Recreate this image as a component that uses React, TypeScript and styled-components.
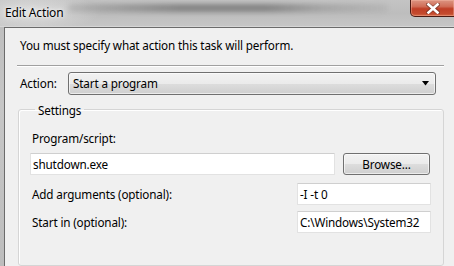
import React from 'react';
import styled, { createGlobalStyle } from 'styled-components';

const Global = createGlobalStyle`
  html, body { margin: 0; padding: 0; background: #c4c4c4; }
  body {
    font-family: "Noto Sans", "Open Sans", "DejaVu Sans", sans-serif;
    font-size: 11.7px;
    letter-spacing: -0.15px;
    color: #000;
  }
`;

const Screen = styled.div`
  width: 454px;
  height: 266px;
  overflow: hidden;
  display: flex;
  flex-direction: column;
  background: linear-gradient(180deg, #bcbcbc 0%, #c6c6c6 40%, #bdbdbd 100%);
`;

const TitleBar = styled.div`
  position: relative;
  height: 26px;
  flex: none;
  display: flex;
  justify-content: space-between;
  align-items: flex-start;
  border-bottom: 1px solid #d6d6d6;
  background:
    radial-gradient(ellipse 70px 20px at 30px 12px, rgba(235, 235, 235, 0.7), rgba(235, 235, 235, 0)),
    linear-gradient(180deg, #c4c4c4 0%, #bdbdbd 50%, #c6c6c6 100%);
  overflow: hidden;

  &::before {
    content: "";
    position: absolute;
    left: 68px;
    top: 4px;
    width: 320px;
    height: 8px;
    border-radius: 4px;
    background: linear-gradient(90deg,
      rgba(140,140,140,0.3) 0%,
      rgba(125,125,125,0.5) 15%,
      rgba(100,100,100,0.65) 35%,
      rgba(100,100,100,0.65) 62%,
      rgba(135,135,135,0.45) 80%,
      rgba(155,155,155,0.25) 100%);
    filter: blur(2.5px);
  }
`;

const Title = styled.div`
  position: relative;
  padding: 5px 0 0 5px;
  line-height: 16px;
  font-size: 12px;
  color: #000;
  text-shadow: 0 0 6px rgba(255, 255, 255, 0.95), 0 0 3px rgba(255, 255, 255, 0.8);
`;

const CloseButton = styled.div`
  position: relative;
  width: 43px;
  height: 16px;
  margin-right: -1px;
  border: 1px solid #4a1a12;
  border-top: none;
  border-radius: 0 0 0 5px;
  background: linear-gradient(180deg, #dc9482 0%, #d06e58 40%, #bf3e26 55%, #c44a2e 85%, #d46a48 100%);
  box-shadow: inset 0 0 0 1px rgba(255, 200, 180, 0.35);
  display: flex;
  align-items: center;
  justify-content: center;
`;

const Frame = styled.div`
  flex: 1;
  display: flex;
  padding-left: 4px;
  min-height: 0;
`;

const Client = styled.div`
  flex: 1;
  background: #f0f0f0;
  border-left: 1px solid #6b6b6b;
  border-top: 1px solid #6b6b6b;
  padding-top: 9px;
  display: flex;
  flex-direction: column;
  min-height: 0;
`;

const Message = styled.div`
  padding-left: 15px;
  line-height: 16px;
`;

const Separator = styled.div`
  margin: 12px 10px 0 12px;
  height: 1px;
  background: #a0a0a0;
  border-bottom: 1px solid #ffffff;
`;

const ActionRow = styled.div`
  margin-top: 5px;
  padding: 0 18px 0 15px;
  display: flex;
  align-items: center;
`;

const Label = styled.span<{ $width?: number; $indent?: number }>`
  flex: none;
  line-height: 16px;
  white-space: nowrap;
  ${(p) => (p.$width ? `width: ${p.$width}px;` : '')}
  ${(p) => (p.$indent ? `margin-left: ${p.$indent}px;` : '')}
`;

const Combo = styled.div`
  flex: 1;
  height: 21px;
  border: 1px solid #707070;
  border-radius: 3px;
  background: linear-gradient(180deg, #f2f2f2 0%, #ebebeb 50%, #dddddd 51%, #cfcfcf 100%);
  box-shadow: inset 0 0 0 1px rgba(255, 255, 255, 0.6);
  display: flex;
  align-items: center;
  justify-content: space-between;
  padding: 0 5px 0 4px;
`;

const ComboText = styled.span`
  line-height: 16px;
`;

const Group = styled.fieldset`
  margin: 7px 10px 0 13px;
  padding: 12px 12px 0 11px;
  border: 1px solid #d5d5d5;
  border-radius: 3px;
  box-shadow: inset 1px 1px 0 #ffffff;
  height: 200px;
  min-width: 0;
`;

const Legend = styled.legend`
  margin-left: 5px;
  padding: 0 3px;
  line-height: 16px;
`;

const FieldLabelRow = styled.div`
  padding-left: 2px;
  line-height: 16px;
`;

const Row = styled.div<{ $gap: number }>`
  margin-top: ${(p) => p.$gap}px;
  display: flex;
  align-items: center;
  justify-content: space-between;
  gap: 8px;
`;

const TextBox = styled.div<{ $width?: number }>`
  ${(p) => (p.$width ? `width: ${p.$width}px; flex: none;` : 'flex: 1;')}
  height: 22px;
  box-sizing: border-box;
  background: #ffffff;
  border: 1px solid #e2e2e2;
  border-top-color: #cfcfcf;
  border-radius: 1px;
  padding: 0 3px 0 2px;
  display: flex;
  align-items: center;
  line-height: 16px;
  white-space: nowrap;
  overflow: hidden;
`;

const Button = styled.div`
  flex: none;
  width: 87px;
  height: 22px;
  box-sizing: border-box;
  margin-right: 1px;
  border: 1px solid #707070;
  border-radius: 3px;
  background: linear-gradient(180deg, #f2f2f2 0%, #ebebeb 50%, #dddddd 51%, #cfcfcf 100%);
  box-shadow: inset 0 0 0 1px rgba(255, 255, 255, 0.6);
  display: flex;
  align-items: center;
  justify-content: center;
  line-height: 16px;
`;

const CloseGlyph = () => (
  <svg width="14" height="11" viewBox="0 0 14 11">
    <path d="M2 1.5 L12 9.5 M12 1.5 L2 9.5" stroke="#5a2a22" strokeWidth="4.2" strokeLinecap="square" opacity="0.55" />
    <path d="M2.5 1.5 L11.5 9.5 M11.5 1.5 L2.5 9.5" stroke="#ffffff" strokeWidth="2.6" strokeLinecap="square" />
  </svg>
);

const Arrow = () => (
  <svg width="8" height="5" viewBox="0 0 8 5">
    <path d="M0 0 H7 L3.5 4.5 Z" fill="#000" />
  </svg>
);

export default function App() {
  return (
    <>
      <Global />
      <Screen>
        <TitleBar>
          <Title>Edit Action</Title>
          <CloseButton>
            <CloseGlyph />
          </CloseButton>
        </TitleBar>
        <Frame>
          <Client>
            <Message>You must specify what action this task will perform.</Message>
            <Separator />
            <ActionRow>
              <Label $width={48}>Action:</Label>
              <Combo>
                <ComboText>Start a program</ComboText>
                <Arrow />
              </Combo>
            </ActionRow>
            <Group>
              <Legend>Settings</Legend>
              <FieldLabelRow>Program/script:</FieldLabelRow>
              <Row $gap={7}>
                <TextBox>shutdown.exe</TextBox>
                <Button>Browse...</Button>
              </Row>
              <Row $gap={8}>
                <Label $indent={2}>Add arguments (optional):</Label>
                <TextBox $width={134}>-I -t 0</TextBox>
              </Row>
              <Row $gap={6}>
                <Label $indent={2}>Start in (optional):</Label>
                <TextBox $width={134}>C:\Windows\System32</TextBox>
              </Row>
            </Group>
          </Client>
        </Frame>
      </Screen>
    </>
  );
}
